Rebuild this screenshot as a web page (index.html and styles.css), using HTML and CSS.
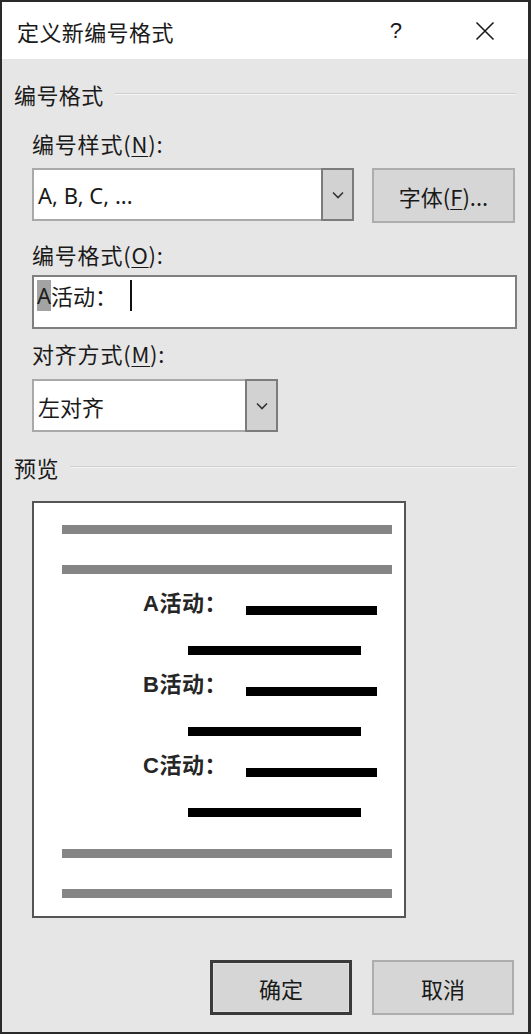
FILE: index.html
```html
<!DOCTYPE html>
<html lang="zh-CN">
<head>
<meta charset="utf-8">
<title>定义新编号格式</title>
<link rel="stylesheet" href="styles.css">
</head>
<body>
<div class="dialog">
  <div class="titlebar">
    <span class="title">定义新编号格式</span>
    <span class="help">?</span>
    <svg class="close" width="20" height="20" viewBox="0 0 20 20"><path d="M1.5 1.5L18.5 18.5M18.5 1.5L1.5 18.5"/></svg>
  </div>
  <div class="content">
    <div class="group-head g1"><span>编号格式</span><i class="rule"></i></div>
    <div class="label l1">编号样式(<u>N</u>):</div>
    <div class="row r1">
      <div class="combo combo-wide">
        <span class="combo-text">A, B, C, ...</span>
        <span class="drop"><svg width="12" height="8" viewBox="0 0 12 8"><path d="M1 1.5L6 6.5L11 1.5"/></svg></span>
      </div>
      <div class="btn btn-font">字体(<u>F</u>)...</div>
    </div>
    <div class="label l2">编号格式(<u>O</u>):</div>
    <div class="textbox"><span class="sel">A</span><span class="typed">活动：</span><span class="caret"></span></div>
    <div class="label l3">对齐方式(<u>M</u>):</div>
    <div class="combo combo-narrow">
      <span class="combo-text">左对齐</span>
      <span class="drop"><svg width="12" height="8" viewBox="0 0 12 8"><path d="M1 1.5L6 6.5L11 1.5"/></svg></span>
    </div>
    <div class="group-head g2"><span>预览</span><i class="rule"></i></div>
    <div class="preview">
      <div class="pline gray"></div>
      <div class="pline gray"></div>
      <div class="prow"><span class="ptext">A活动：</span><div class="pline black first"></div></div>
      <div class="pline black second"></div>
      <div class="prow"><span class="ptext">B活动：</span><div class="pline black first"></div></div>
      <div class="pline black second"></div>
      <div class="prow"><span class="ptext">C活动：</span><div class="pline black first"></div></div>
      <div class="pline black second"></div>
      <div class="pline gray"></div>
      <div class="pline gray"></div>
    </div>
    <div class="actions">
      <div class="btn btn-ok">确定</div>
      <div class="btn btn-cancel">取消</div>
    </div>
  </div>
</div>
</body>
</html>
```

FILE: styles.css
```css
* { box-sizing: border-box; }
html, body { margin: 0; padding: 0; }
body {
  width: 531px;
  height: 1034px;
  font-family: "Noto Sans", "Noto Sans CJK SC", sans-serif;
  color: #1a1a1a;
}
.dialog {
  width: 531px;
  height: 1034px;
  border: 2px solid #2a2a2a;
  border-right-width: 3px;
  background: #e6e6e6;
  display: flex;
  flex-direction: column;
}
.titlebar {
  height: 57px;
  background: #ffffff;
  display: flex;
  align-items: center;
  padding-left: 15px;
  flex: none;
}
.title {
  font-size: 22px;
  line-height: 24px;
  letter-spacing: 0.4px;
  font-family: "Noto Sans CJK SC", sans-serif;
  flex: 1;
}
.help {
  font-family: "Liberation Sans", sans-serif;
  font-size: 22px;
  color: #1a1a1a;
  margin-right: 73px;
}
.close {
  margin-right: 33px;
  stroke: #1a1a1a;
  stroke-width: 1.6;
  fill: none;
}
.content {
  display: flex;
  flex-direction: column;
  align-items: flex-start;
  padding-left: 30px;
  padding-right: 12px;
}
.group-head {
  display: flex;
  align-items: center;
  width: calc(100% + 18px);
  margin-left: -18px;
  height: 24px;
  font-size: 22px;
  line-height: 24px;
  letter-spacing: 0.4px;
  font-family: "Noto Sans CJK SC", sans-serif;
}
.group-head .rule {
  flex: 1;
  height: 2px;
  background: #cfcfcf;
  border-bottom: 1px solid #f4f4f4;
  margin-left: 11px;
  margin-top: -1px;
}
.g1 { margin-top: 23px; }
.g2 { margin-top: 23px; }
.label {
  font-size: 22px;
  line-height: 24px;
  height: 24px;
  font-family: "Noto Sans CJK SC", sans-serif;
  letter-spacing: 0.8px;
}
.label u { text-underline-offset: 3px; text-decoration-thickness: 1px; }
.l1 { margin-top: 25px; }
.l2 { margin-top: 19px; }
.l3 { margin-top: 12px; }
.row {
  display: flex;
  gap: 18px;
  width: 100%;
}
.r1 { margin-top: 13px; }
.combo {
  height: 53px;
  background: #ffffff;
  border: 2px solid #a9a9a9;
  display: flex;
  align-items: stretch;
}
.combo-wide { width: 322px; }
.combo-narrow { width: 246px; margin-top: 14px; }
.combo-text {
  flex: 1;
  display: flex;
  align-items: center;
  padding-left: 4px;
  font-size: 22px;
  font-family: "Noto Sans", "Noto Sans CJK SC", sans-serif;
}
.combo-narrow .combo-text { font-family: "Noto Sans CJK SC", sans-serif; }
.drop {
  width: 33px;
  margin: -2px -2px -2px 0;
  background: #d2d2d2;
  border: 2px solid #7c7c7c;
  display: flex;
  align-items: center;
  justify-content: center;
}
.drop svg { fill: none; stroke: #333; stroke-width: 1.6; }
.btn {
  display: flex;
  align-items: center;
  justify-content: center;
  background: #d6d6d6;
  border: 2px solid #adadad;
  font-size: 22px;
  font-family: "Noto Sans CJK SC", sans-serif;
}
.btn u { text-underline-offset: 3px; text-decoration-thickness: 1px; }
.btn-font { width: 143px; height: 55px; }
.textbox {
  margin-top: 9px;
  width: 485px;
  height: 54px;
  background: #ffffff;
  border: 2px solid #7f7f7f;
  display: flex;
  align-items: flex-start;
  padding: 3px 0 0 3px;
  font-size: 22px;
  line-height: 31px;
  font-family: "Noto Sans CJK SC", sans-serif;
}
.sel { background: #a3a3a3; color: #1e1e1e; font-family: "Noto Sans", sans-serif; }
.caret {
  width: 2px;
  height: 31px;
  background: #111;
  margin-left: 13px;
}
.preview {
  margin-top: 22px;
  width: 374px;
  height: 417px;
  background: #ffffff;
  border: 2px solid #555;
  padding-top: 22px;
  display: flex;
  flex-direction: column;
  gap: 31.45px;
}
.pline { height: 9px; flex: none; }
.pline.gray { background: #858585; width: 330px; margin-left: 28px; }
.pline.black { background: #000; }
.pline.first { width: 131px; }
.pline.second { width: 173px; margin-left: 154px; }
.prow {
  display: flex;
  align-items: center;
  height: 9px;
  padding-left: 109px;
}
.ptext {
  width: 103px;
  flex: none;
  line-height: 22px;
  margin-bottom: 13px;
  font-size: 22px;
  font-weight: bold;
  letter-spacing: 0.5px;
  color: #262626;
  font-family: "Liberation Sans Narrow", "Liberation Sans", "Noto Sans CJK SC", sans-serif;
  white-space: nowrap;
}
.actions {
  margin-top: 42px;
  display: flex;
  gap: 20px;
  align-self: flex-end;
  margin-right: 2px;
}
.btn-ok, .btn-cancel { width: 142px; height: 55px; }
.btn-ok { border: 3px solid #3a3a3a; box-shadow: inset 0 0 0 1px #e0e0e0; }
```
